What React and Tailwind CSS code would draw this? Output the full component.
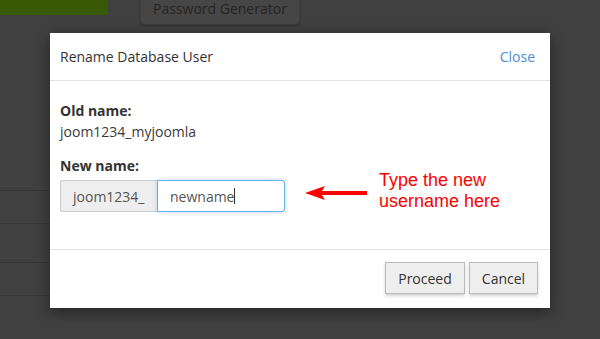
export default function App() {
  return (
    <div className="relative w-[600px] h-[339px] overflow-hidden bg-[#404040] font-['Open_Sans',sans-serif]">
      {/* page underneath the overlay */}
      <div className="flex items-start gap-8">
        <div className="w-[108px] h-[15px] bg-[#3a5907]" />
        <div className="-mt-[8px] h-[33px] px-3 flex items-center bg-[#464646] border border-[#3c3c3c] rounded-sm shadow-[0_1px_2px_rgba(0,0,0,0.3)] text-[14px] text-[#252525]">
          Password Generator
        </div>
      </div>
      <div className="mt-[165px] w-[60px] flex flex-col">
        <div className="h-[33px] border-t border-[#353535]" />
        <div className="h-[39px] border-t border-[#353535]" />
        <div className="h-[33px] border-t border-[#353535]" />
        <div className="border-t border-[#353535]" />
      </div>

      {/* modal */}
      <div className="absolute left-[50px] top-[33px] w-[500px] h-[275px] bg-white flex flex-col shadow-[0_4px_14px_rgba(0,0,0,0.45)]">
        <div className="h-[48px] flex items-center justify-between pl-[10px] pr-[15px] border-b border-[#e3e3e3]">
          <span className="text-[14px] text-[#333]">Rename Database User</span>
          <span className="text-[14px] text-[#4a8fd4]">Close</span>
        </div>
        <div className="h-[169px] px-[10px] pt-[20px] border-b border-[#e3e3e3]">
          <div className="text-[14px] font-bold text-[#333] leading-[20px]">Old name:</div>
          <div className="text-[14px] text-[#3a3a3a] leading-[20px] mt-[1px]">joom1234_myjoomla</div>
          <div className="text-[14px] font-bold text-[#333] leading-[20px] mt-[14px]">New name:</div>
          <div className="flex items-center mt-[4px]">
            <div className="flex h-[32px]">
              <div className="w-[97px] flex items-center pl-[12px] bg-[#eee] border border-[#ccc] border-r-0 rounded-l-[3px] text-[14px] text-[#555]">
                joom1234_
              </div>
              <div className="w-[128px] flex items-center pl-[12px] border border-[#66afe9] rounded-r-[3px] shadow-[0_0_4px_rgba(102,175,233,0.5)] text-[14px] text-[#555]">
                newname<span className="w-px h-[16px] bg-[#333]" />
              </div>
            </div>
            <svg width="62" height="14" viewBox="0 0 62 14" className="ml-[20px] -mt-[6px]">
              <path d="M0 7 L20 0 L17 5 L62 5 L62 9 L17 9 L20 14 Z" fill="#f00" />
            </svg>
            <div className="ml-[12px] -mt-[11px] font-['Liberation_Sans',Arial,sans-serif] text-[18px] leading-[21px] text-[#f00]">
              Type the new<br />username here
            </div>
          </div>
        </div>
        <div className="flex-1 flex items-start justify-end gap-[4px] pt-[12px] pr-[12px]">
          <button className="h-[32px] w-[80px] bg-[#eee] border border-[#bbb] shadow-[0_2px_3px_rgba(0,0,0,0.18)] text-[14px] text-[#333]">
            Proceed
          </button>
          <button className="h-[32px] w-[69px] bg-[#eee] border border-[#bbb] shadow-[0_2px_3px_rgba(0,0,0,0.18)] text-[14px] text-[#333]">
            Cancel
          </button>
        </div>
      </div>
    </div>
  );
}
